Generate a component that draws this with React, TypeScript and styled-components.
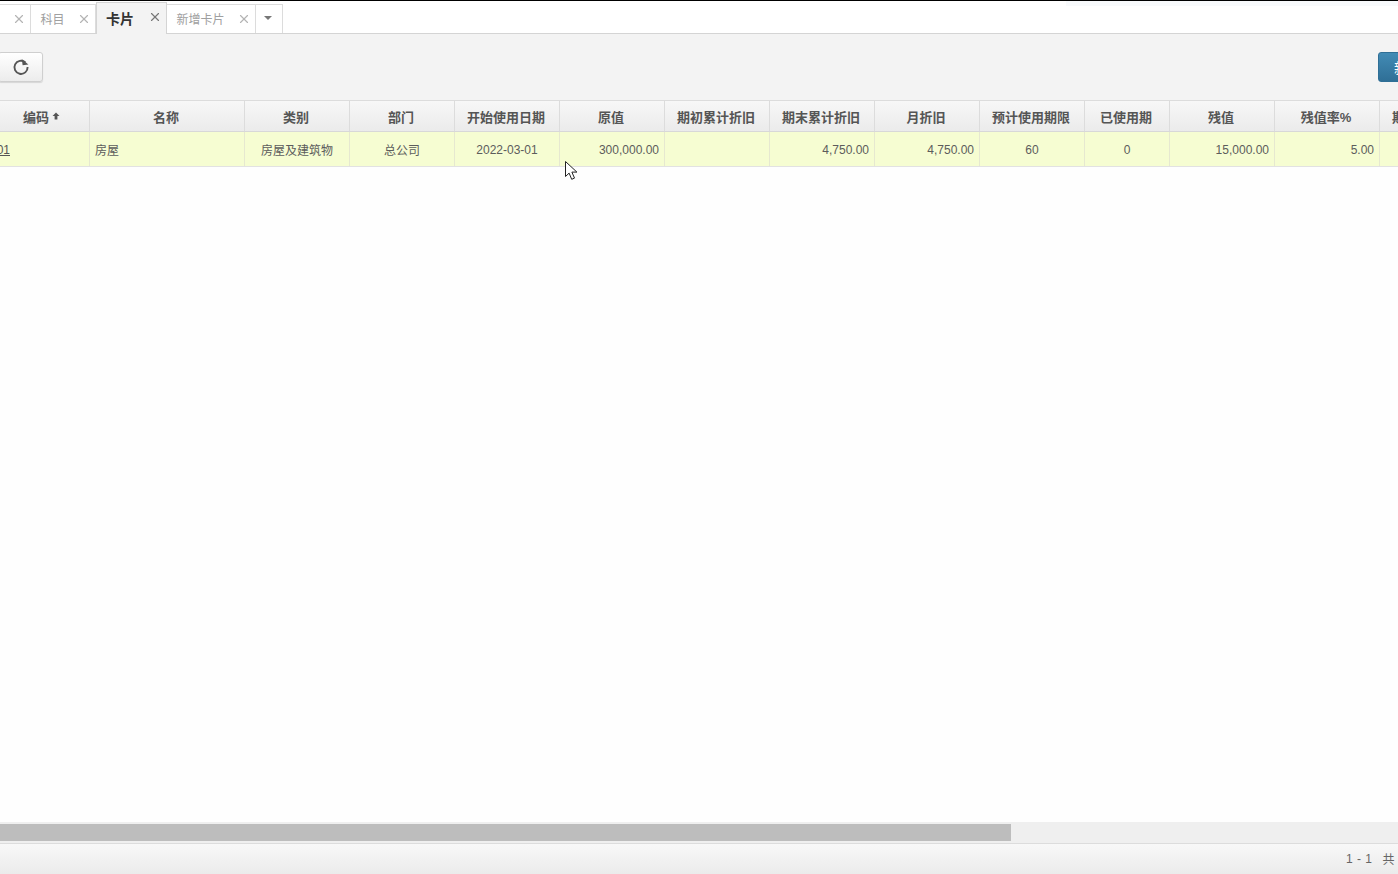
import React from 'react';
import styled, { createGlobalStyle } from 'styled-components';
import { X } from 'lucide-react';

const Global = createGlobalStyle`
  html, body { margin: 0; padding: 0; background: #fff; }
  body { font-family: "Liberation Sans", "Noto Sans CJK SC", sans-serif; font-size: 12px; color: #555; }
  * { box-sizing: border-box; }
`;

const Page = styled.div`
  position: relative;
  width: 1398px;
  height: 874px;
  overflow: hidden;
  display: flex;
  flex-direction: column;
  background: #fff;
  border-top: 1px solid #000;
`;

const Glow = styled.div`
  position: absolute;
  top: 0;
  left: 1066px;
  right: 0;
  height: 5px;
  background: #f8fafc;
`;

const TabBar = styled.div`
  height: 33px;
  flex: none;
  display: flex;
  align-items: flex-end;
  background: #fff;
  border-bottom: 1px solid #d4d4d4;
`;

const Tab = styled.div<{ $w: number; $active?: boolean }>`
  position: relative;
  width: ${p => p.$w}px;
  height: ${p => (p.$active ? 32 : 29)}px;
  flex: none;
  display: flex;
  align-items: center;
  padding: ${p => (p.$active ? '0 0 2px 9px' : '0 0 2px 9.5px')};
  margin-bottom: ${p => (p.$active ? -1 : 0)}px;
  font-size: ${p => (p.$active ? 14 : 12)}px;
  font-weight: ${p => (p.$active ? 700 : 400)};
  color: ${p => (p.$active ? '#333' : '#a0a0a0')};
  background: ${p => (p.$active ? '#f3f3f3' : '#fff')};
  border-right: 1px solid #dcdcdc;
  border-top: 1px solid #dcdcdc;
  ${p => p.$active && 'border-left: 1px solid #d4d4d4; border-right-color: #d4d4d4; border-top-color: #d4d4d4;'}
`;

const Close = styled(X)<{ $dark?: boolean }>`
  position: absolute;
  right: 4px;
  top: 7px;
  color: ${p => (p.$dark ? '#777' : '#b4b4b4')};
`;

const Caret = styled.div`
  width: 0;
  height: 0;
  margin-left: -1.5px;
  border-left: 4px solid transparent;
  border-right: 4px solid transparent;
  border-top: 4px solid #777;
`;

const Toolbar = styled.div`
  height: 66px;
  flex: none;
  display: flex;
  justify-content: space-between;
  align-items: flex-start;
  padding-top: 18px;
  background: #f3f3f3;
`;

const RefreshButton = styled.div`
  width: 45px;
  height: 30px;
  margin-left: -2px;
  display: flex;
  align-items: center;
  justify-content: center;
  padding-left: 1px;
  background: linear-gradient(#ffffff, #ececec);
  border: 1px solid #cfcfcf;
  border-radius: 3px;
  box-shadow: 0 1px 1px rgba(0, 0, 0, 0.12);
  color: #555;
`;

const PrimaryButton = styled.div`
  width: 60px;
  height: 30px;
  margin-right: -40px;
  padding: 4px 0 0 15px;
  white-space: nowrap;
  background: linear-gradient(#428bb5, #2f6f96);
  border: 1px solid #2f6f96;
  border-radius: 3px 0 0 3px;
  font-size: 14px;
  color: #fff;
`;

const Grid = styled.div`
  flex: none;
  margin-left: -60px;
  width: 1600px;
`;

const Row = styled.div<{ $head?: boolean }>`
  display: flex;
  height: ${p => (p.$head ? 32 : 35)}px;
  border-top: ${p => (p.$head ? '1px solid #dcdcdc' : 'none')};
  border-bottom: 1px solid ${p => (p.$head ? '#d8d8d8' : '#e2e2e2')};
  background: ${p => (p.$head ? 'linear-gradient(#f7f7f7, #ebebeb)' : '#f6fdd2')};
`;

const Cell = styled.div<{ $w: number; $align?: string; $head?: boolean; $latin?: boolean }>`
  width: ${p => p.$w}px;
  flex: none;
  display: flex;
  align-items: center;
  justify-content: ${p => p.$align ?? 'center'};
  padding: ${p => (p.$head ? '0 6px 0 4px' : p.$latin ? '2px 5px 0' : '0 5px')};
  white-space: nowrap;
  overflow: hidden;
  border-right: 1px solid ${p => (p.$head ? '#dcdcdc' : '#e6e8d0')};
  font-size: ${p => (p.$head ? 13 : 12)}px;
  font-weight: ${p => (p.$head ? 700 : 400)};
  color: ${p => (p.$head ? '#555' : '#5c5c5c')};
`;

const CodeLink = styled.span`
  text-decoration: underline;
  color: #555;
  margin-right: 74px;
`;

const CodeSpacer = styled.span`
  width: 56px;
  flex: none;
`;

const SortMark = styled.svg`
  margin-left: 3px;
  flex: none;
`;

const Filler = styled.div`
  flex: 1;
  background: #fefefe;
`;

const ScrollTrack = styled.div`
  height: 21px;
  flex: none;
  padding-top: 2px;
  background: #efefef;
`;

const ScrollThumb = styled.div`
  width: 1011px;
  height: 17px;
  background: #bdbdbd;
`;

const Footer = styled.div`
  height: 31px;
  flex: none;
  display: flex;
  align-items: center;
  padding: 0 0 1px 1346px;
  white-space: nowrap;
  overflow: hidden;
  background: linear-gradient(#f8f8f8, #ebebeb);
  border-top: 1px solid #dcdcdc;
  color: #666;
`;

const Pager = styled.span`
  letter-spacing: 0.5px;
  margin-right: 10px;
`;

const Pointer = styled.svg`
  position: absolute;
  left: 564px;
  top: 159px;
`;

const columns: { w: number; title: string; value: React.ReactNode; align?: string; latin?: boolean }[] = [
  { w: 150, title: '编码', value: null, latin: true },
  { w: 155, title: '名称', value: '房屋', align: 'flex-start' },
  { w: 105, title: '类别', value: '房屋及建筑物' },
  { w: 105, title: '部门', value: '总公司' },
  { w: 105, title: '开始使用日期', value: '2022-03-01', latin: true },
  { w: 105, title: '原值', value: '300,000.00', align: 'flex-end', latin: true },
  { w: 105, title: '期初累计折旧', value: '', align: 'flex-end' },
  { w: 105, title: '期末累计折旧', value: '4,750.00', align: 'flex-end', latin: true },
  { w: 105, title: '月折旧', value: '4,750.00', align: 'flex-end', latin: true },
  { w: 105, title: '预计使用期限', value: '60', latin: true },
  { w: 85, title: '已使用期', value: '0', latin: true },
  { w: 105, title: '残值', value: '15,000.00', align: 'flex-end', latin: true },
  { w: 105, title: '残值率%', value: '5.00', align: 'flex-end', latin: true },
  { w: 105, title: '期末账面净值', value: '' },
];

export default function App() {
  return (
    <>
      <Global />
      <Page>
        <Glow />
        <TabBar>
          <Tab $w={31}><Close size={14} /></Tab>
          <Tab $w={65}>科目<Close size={14} /></Tab>
          <Tab $w={71} $active>卡片<Close size={14} $dark /></Tab>
          <Tab $w={89}>新增卡片<Close size={14} /></Tab>
          <Tab $w={27}><Caret /></Tab>
        </TabBar>
        <Toolbar>
          <RefreshButton>
            <svg width="18" height="18" viewBox="0 0 18 18" fill="none">
              <path d="M13.4 4.4A6.6 6.6 0 1 0 15.6 9" stroke="#555" strokeWidth="1.9" />
              <path d="M10.2 .6v6.4h5.8z" fill="#555" transform="rotate(-8 12 4)" />
            </svg>
          </RefreshButton>
          <PrimaryButton>新增</PrimaryButton>
        </Toolbar>
        <Grid>
          <Row $head>
            {columns.map((c, i) => (
              <Cell key={c.title} $w={c.w} $head>
                {i === 0 ? <CodeSpacer /> : null}
                {c.title}
                {i === 0 ? (
                  <SortMark width="8" height="8" viewBox="0 0 8 8">
                    <path d="M4 0.5 7.5 4H5.4v3.5H2.6V4H.5z" fill="#555" />
                  </SortMark>
                ) : null}
              </Cell>
            ))}
          </Row>
          <Row>
            {columns.map((c, i) => (
              <Cell key={c.title} $w={c.w} $align={i === 0 ? 'flex-end' : c.align} $latin={c.latin}>
                {i === 0 ? <CodeLink>0001</CodeLink> : c.value}
              </Cell>
            ))}
          </Row>
        </Grid>
        <Filler />
        <ScrollTrack><ScrollThumb /></ScrollTrack>
        <Footer>
          <Pager>1 - 1</Pager>
          <span>共 1 条</span>
        </Footer>
        <Pointer width="16" height="22" viewBox="0 0 16 22">
          <path d="M1.5 1.5v15l3.6-3.4 2.6 6.2 2.8-1.2-2.6-6h5z" fill="#fff" stroke="#222" strokeWidth="1" />
        </Pointer>
      </Page>
    </>
  );
}
